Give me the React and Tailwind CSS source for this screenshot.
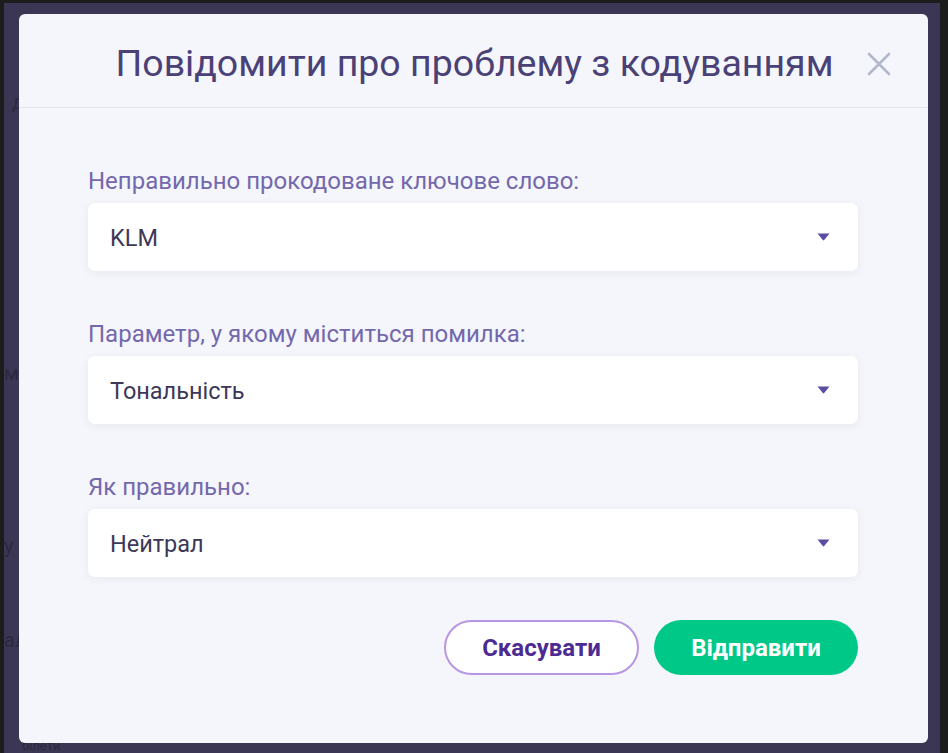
import React from "react";

function Caret() {
  return (
    <svg width="13" height="8" viewBox="0 0 13 8" className="shrink-0">
      <path d="M0.5 0.5 H12.5 L7.2 7 Q6.5 7.8 5.8 7 Z" fill="#5a4ea3" />
    </svg>
  );
}

function Field({ label, value }) {
  return (
    <div className="flex flex-col">
      <div className="text-[24px] leading-[28px] text-[#7468ad] mb-[8px]">{label}</div>
      <div className="h-[68px] bg-white rounded-[7px] shadow-[0_2px_8px_rgba(60,60,120,0.07)] flex items-center pl-[22px] pr-[28px] justify-between">
        <span className="text-[23.5px] text-[#3d3858] pt-[3px]">{value}</span>
        <Caret />
      </div>
    </div>
  );
}

export default function App() {
  return (
    <div
      className="w-[948px] h-[753px] bg-[#1c1c1c] overflow-hidden relative"
      style={{ fontFamily: "Roboto, 'Noto Sans', sans-serif" }}
    >
      <div className="absolute left-[4px] top-[3px] w-[936px] h-[760px] bg-[#3b3653]">
        <div className="absolute left-[8px] top-[84px] text-[#2c2840] text-[20px]">д</div>
        <div className="absolute left-[0px] top-[355px] text-[#2c2840] text-[20px]">м</div>
        <div className="absolute left-[0px] top-[528px] text-[#2c2840] text-[20px]">у</div>
        <div className="absolute left-[0px] top-[622px] text-[#2c2840] text-[20px]">ал</div>
        <div className="absolute left-[18px] top-[736px] text-[#2c2840] text-[13px] leading-[13px]">білети</div>
      </div>
      <div className="absolute left-[19px] top-[14px] w-[909px] h-[729px] bg-[#f5f6fb] rounded-[6px] flex flex-col">
        <div className="h-[94px] shrink-0 border-b border-[#e3e3f0] flex items-center relative">
          <div className="w-full text-center text-[37.5px] text-[#4a4176] pl-[2px] pt-[6px]">
            Повідомити про проблему з кодуванням
          </div>
          <svg
            className="absolute left-[848px] top-[38px]"
            width="24"
            height="24"
            viewBox="0 0 24 24"
          >
            <path d="M2 2 L22 22 M22 2 L2 22" stroke="#b2b7ca" strokeWidth="2.6" strokeLinecap="round" />
          </svg>
        </div>
        <div className="pl-[69px] pr-[70px] pt-[59px] flex flex-col gap-[49px]">
          <Field label="Неправильно прокодоване ключове слово:" value="KLM" />
          <Field label="Параметр, у якому міститься помилка:" value="Тональність" />
          <Field label="Як правильно:" value="Нейтрал" />
        </div>
        <div className="flex justify-end gap-[15px] pr-[70px] mt-[43px]">
          <button className="w-[195px] h-[55px] rounded-full border-2 border-[#b796e4] bg-white text-[24px] font-bold text-[#4c2c93]">
            Скасувати
          </button>
          <button className="w-[204px] h-[55px] rounded-full bg-[#00c987] text-[24px] font-bold text-white">
            Відправити
          </button>
        </div>
      </div>
    </div>
  );
}
